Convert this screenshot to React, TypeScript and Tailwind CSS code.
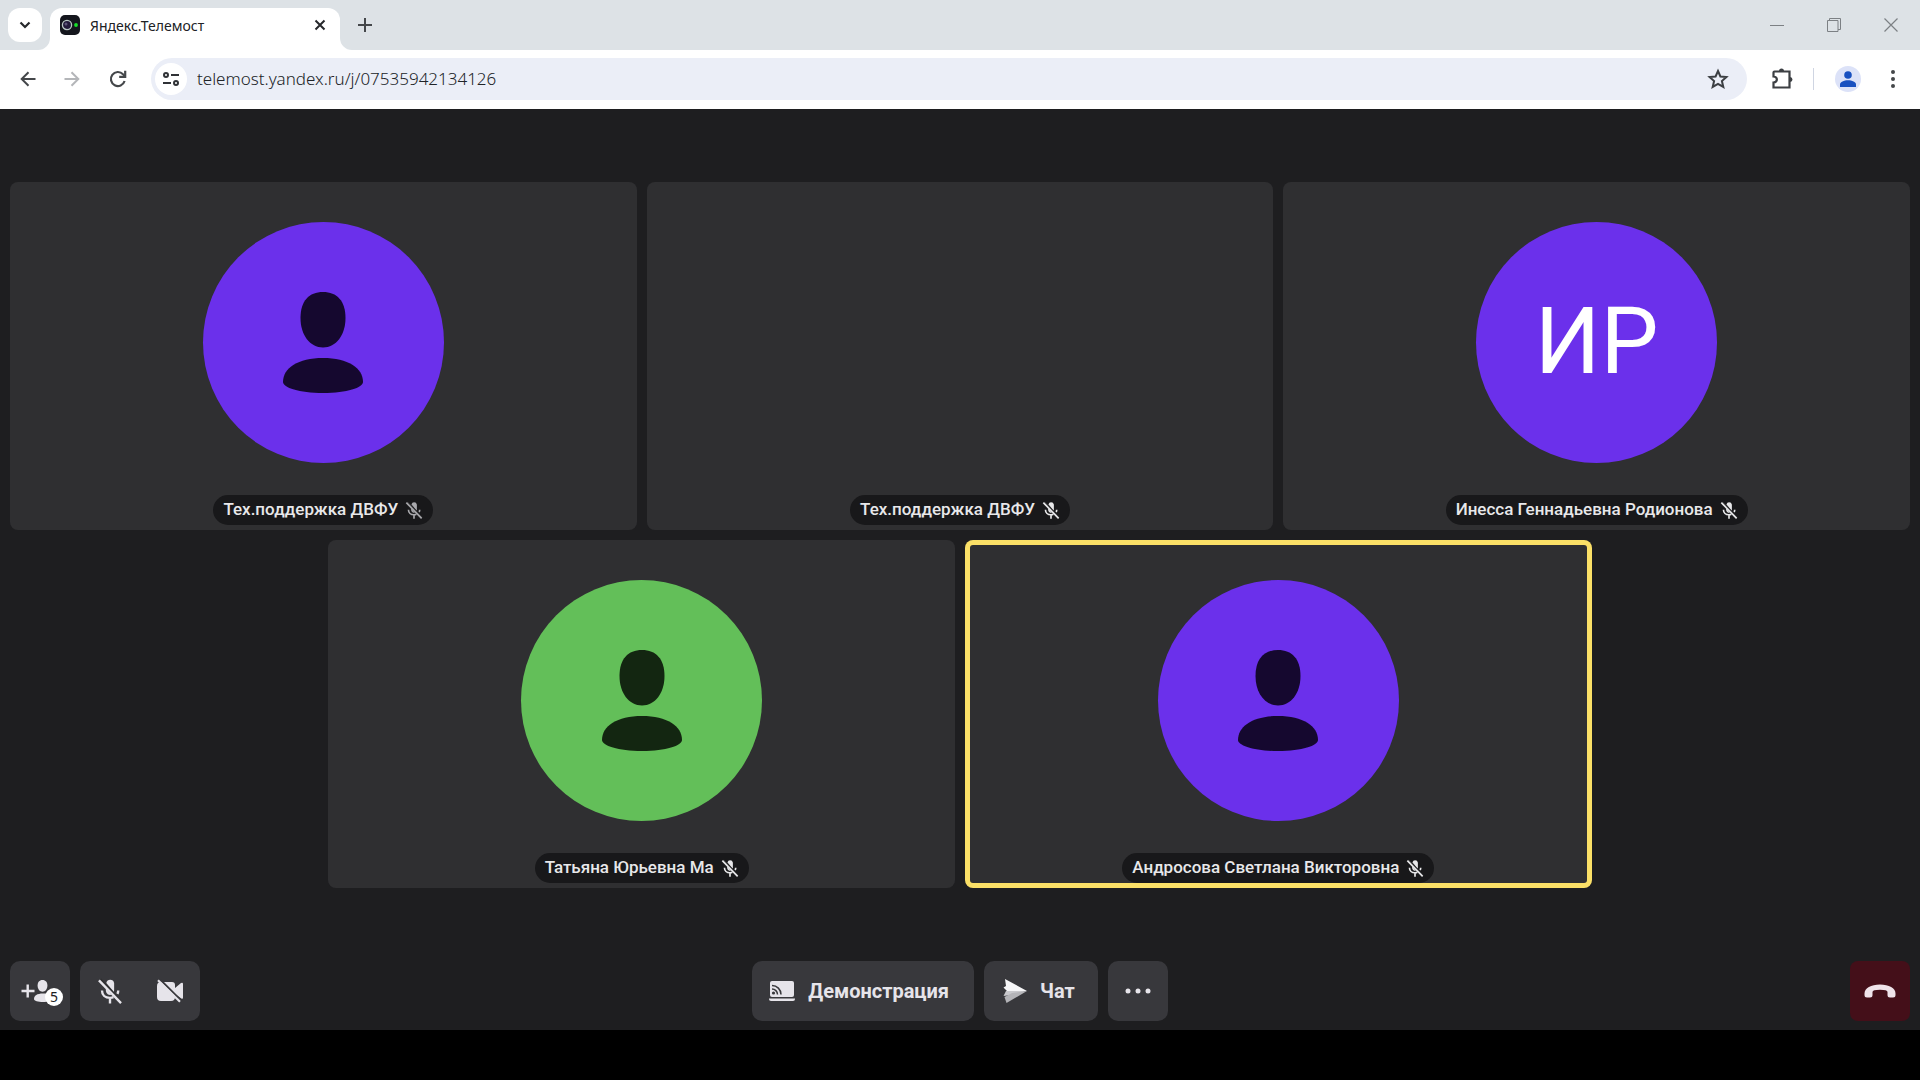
import React from "react";

type Participant = {
  name: string;
  avatar: "purple" | "green" | "initials" | "none";
  place: string;
  speaking?: boolean;
  dimMic?: boolean;
};

const participants: Participant[] = [
  { name: "Тех.поддержка ДВФУ", avatar: "purple", place: "col-span-2", dimMic: true },
  { name: "Тех.поддержка ДВФУ", avatar: "none", place: "col-span-2" },
  { name: "Инесса Геннадьевна Родионова", avatar: "initials", place: "col-span-2" },
  { name: "Татьяна Юрьевна Ма", avatar: "green", place: "col-span-2 col-start-2" },
  { name: "Андросова Светлана Викторовна", avatar: "purple", place: "col-span-2", speaking: true },
];

function MicOff({ className }: { className: string }) {
  return (
    <svg viewBox="0 0 24 24" className={className} fill="none" aria-hidden="true">
      <path d="M8.600 4.500A3.700 3.700 0 0 1 15.800 4.500v6.500c0 .7-.1 1.200-.3 1.700z" fill="currentColor" />
      <path d="M8.200 9.500v2.500a4 4 0 0 0 5 3.500z" fill="currentColor" />
      <path d="M4.600 11.500c0 4 3 6.800 7.400 6.800 1.200 0 2.300-.2 3.200-.6M12 18.300V23.500M19.600 11.500c0 1.200-.3 2.300-.8 3.200" stroke="currentColor" strokeWidth="2.200" />
      <path d="M3.200 1.200l19 21" className="stroke-[#2f2f31]" strokeWidth="2" />
      <path d="M1.800 2.200l20.400 21" stroke="currentColor" strokeWidth="2.200" />
    </svg>
  );
}

function Person() {
  return (
    <svg viewBox="0 0 80 101" className="h-[101px] w-20" fill="currentColor" aria-hidden="true">
      <path d="M40 0C54 0 62.500 9 62.500 26C62.500 43 53 55.500 40 55.500C27 55.500 17.500 43 17.500 26C17.500 9 26 0 40 0Z" />
      <path d="M40 66C65 66 80 76 80 90C80 95.500 64 101 40 101C16 101 0 95.500 0 90C0 76 15 66 40 66Z" />
    </svg>
  );
}

const avatarColors = {
  purple: "bg-[#6b30eb] text-[#15082f]",
  initials: "bg-[#6b30eb] text-white",
  green: "bg-[#63bf59] text-[#132611]",
  none: "invisible",
};

function Tile({ p }: { p: Participant }) {
  return (
    <article
      className={`${p.place} flex aspect-[9/5] flex-col items-center justify-between rounded-lg bg-[#2f2f31] pt-10 pb-[5px] ${
        p.speaking ? "inset-ring-[5px] inset-ring-[#fbe067]" : ""
      }`}
    >
      <div className={`flex size-[241px] items-center justify-center rounded-full ${avatarColors[p.avatar]}`}>
        {p.avatar === "initials" ? (
          <span className="text-[92px] leading-none">ИР</span>
        ) : p.avatar === "none" ? null : (
          <Person />
        )}
      </div>
      <div className="flex h-[30px] items-center gap-[7px] rounded-full bg-[#18181a] px-2.5 text-[#e8e8ea]">
        <span className="text-[17px] font-medium">{p.name}</span>
        <MicOff className={p.dimMic ? "size-[18px] text-[#a8a8ac]" : "size-[18px]"} />
      </div>
    </article>
  );
}

function BrowserTabs() {
  return (
    <header className="flex h-[50px] items-stretch bg-[#dde2e6]">
      <button aria-label="Поиск вкладок" className="mt-2 ml-2 flex size-[34px] items-center justify-center rounded-xl bg-white text-[#26282b]">
        <svg viewBox="0 0 12 8" className="h-2 w-3" fill="none" stroke="currentColor" strokeWidth="2.200" aria-hidden="true">
          <path d="M1.500 1.500L6 6l4.500-4.500" />
        </svg>
      </button>
      <div className="relative mt-2 ml-2 flex w-[290px] items-center rounded-t-xl bg-white pr-3.5 pb-2 pl-2.5">
        <svg viewBox="0 0 12 12" className="absolute bottom-0 -left-3 size-3 fill-white" aria-hidden="true">
          <path d="M12 0v12H0A12 12 0 0 0 12 0z" />
        </svg>
        <svg viewBox="0 0 12 12" className="absolute -right-3 bottom-0 size-3 fill-white" aria-hidden="true">
          <path d="M0 0v12h12A12 12 0 0 1 0 0z" />
        </svg>
        <svg viewBox="0 0 20 20" className="size-5" aria-hidden="true">
          <rect width="20" height="20" rx="5" fill="#14161d" />
          <circle cx="7" cy="10" r="4.600" fill="#221a3a" stroke="#b9c7c4" strokeWidth="1.300" />
          <circle cx="6" cy="9" r="1.500" fill="#5c5478" />
          <circle cx="16" cy="10" r="1.900" fill="#18e02a" />
        </svg>
        <span className="ml-2.5 flex-1 text-[14px] text-[#202124]">Яндекс.Телемост</span>
        <button aria-label="Закрыть вкладку" className="text-[#26282b]">
          <svg viewBox="0 0 12 12" className="size-3" stroke="currentColor" strokeWidth="2" aria-hidden="true">
            <path d="M1.500 1.500l9 9M10.500 1.500l-9 9" />
          </svg>
        </button>
      </div>
      <button aria-label="Новая вкладка" className="ml-[18px] text-[#44474a]">
        <svg viewBox="0 0 14 14" className="size-3.5" stroke="currentColor" strokeWidth="2" aria-hidden="true">
          <path d="M7 0v14M0 7h14" />
        </svg>
      </button>
      <div className="ml-auto flex items-center gap-[43px] pr-[22px] text-[#7c8084]">
        <button aria-label="Свернуть">
          <svg viewBox="0 0 14 14" className="size-3.5" stroke="currentColor" fill="none" aria-hidden="true">
            <path d="M0 7.500h14" />
          </svg>
        </button>
        <button aria-label="Развернуть">
          <svg viewBox="0 0 14 14" className="size-3.5" stroke="currentColor" fill="none" aria-hidden="true">
            <path d="M.5 2.500h10.500v11H.5zM2.500 2.500v-2h11v11H11" />
          </svg>
        </button>
        <button aria-label="Закрыть">
          <svg viewBox="0 0 14 14" className="size-3.5" stroke="currentColor" fill="none" strokeWidth="1.200" aria-hidden="true">
            <path d="M.5.5l13 13M13.500.5l-13 13" />
          </svg>
        </button>
      </div>
    </header>
  );
}

function AddressBar() {
  return (
    <nav className="flex h-[59px] items-center bg-white pr-[17px] pb-0.5 pl-5 text-[#44474a]">
      <button aria-label="Назад">
        <svg viewBox="0 0 16 16" className="size-4" fill="none" stroke="currentColor" strokeWidth="2" aria-hidden="true">
          <path d="M15.500 8H2M8.500 1.200L1.700 8l6.800 6.800" />
        </svg>
      </button>
      <button aria-label="Вперёд" className="ml-7 text-[#b4b6b9]">
        <svg viewBox="0 0 16 16" className="size-4" fill="none" stroke="currentColor" strokeWidth="2" aria-hidden="true">
          <path d="M.5 8H14M7.500 1.200L14.300 8l-6.800 6.800" />
        </svg>
      </button>
      <button aria-label="Обновить" className="ml-[29px]">
        <svg viewBox="0 0 18 18" className="size-[18px]" fill="none" stroke="currentColor" strokeWidth="2.200" aria-hidden="true">
          <path d="M15.600 11A7 7 0 1 1 14 4.200L16 6.200" />
          <path d="M16.200.8v6h-6" />
        </svg>
      </button>
      <div className="ml-6 flex h-[42px] flex-1 items-center rounded-full bg-[#ebeef7] pr-[18px] pl-1">
        <button aria-label="Сведения о сайте" className="flex size-8 items-center justify-center rounded-full bg-white text-[#303236]">
          <svg viewBox="0 0 16 14" className="h-3.5 w-4" fill="none" stroke="currentColor" strokeWidth="2" aria-hidden="true">
            <circle cx="3" cy="3" r="2" />
            <path d="M8 3h8M0 11h8" />
            <circle cx="13" cy="11" r="2" />
          </svg>
        </button>
        <input
          aria-label="Адресная строка"
          readOnly
          value="telemost.yandex.ru/j/07535942134126"
          className="ml-2.5 min-w-0 flex-1 bg-transparent text-[17px] font-light text-[#202327] outline-none"
        />
        <button aria-label="Добавить в закладки" className="text-[#3c3f43]">
          <svg viewBox="0 0 22 22" className="size-[22px]" fill="none" stroke="currentColor" strokeWidth="2" aria-hidden="true">
            <path d="M11 3l2.400 5.500 6 .5-4.500 4 1.400 5.900L11 15.800l-5.300 3.100L7.100 13 2.600 9l6-.5z" />
          </svg>
        </button>
      </div>
      <button aria-label="Расширения" className="ml-6 text-[#3c3f43]">
        <svg viewBox="0 0 22 22" className="size-[22px]" fill="none" stroke="currentColor" strokeWidth="2.200" aria-hidden="true">
          <path d="M3.500 3.500H18.500V19.500H2.500V14.500C7 14 7 9 2.500 8.500V4.500Q2.500 3.500 3.500 3.500Z" />
          <path d="M8 3a2.500 2.500 0 0 1 5 0zM19 9a2.500 2.500 0 0 1 0 5z" fill="currentColor" stroke="none" />
        </svg>
      </button>
      <span className="ml-5 h-[22px] w-px bg-[#cfd5e2]" />
      <button aria-label="Профиль" className="ml-[21px] flex size-[26px] items-center justify-center rounded-full bg-[#dce2f8] text-[#1850c0]">
        <svg viewBox="0 0 16 16" className="size-4" fill="currentColor" aria-hidden="true">
          <circle cx="8" cy="4" r="3.800" />
          <path d="M0 16v-2.500C0 11 4 9.300 8 9.300s8 1.700 8 4.200V16z" />
        </svg>
      </button>
      <button aria-label="Меню" className="ml-[22px]">
        <svg viewBox="0 0 20 20" className="size-5" fill="currentColor" aria-hidden="true">
          <circle cx="10" cy="3" r="2" />
          <circle cx="10" cy="10" r="2" />
          <circle cx="10" cy="17" r="2" />
        </svg>
      </button>
    </nav>
  );
}

function CallControls() {
  return (
    <footer className="grid grid-cols-[1fr_auto_1fr] items-center px-2.5 pb-[9px] text-[#e6e4ea]">
      <div className="flex gap-2.5">
        <button aria-label="Участники" className="relative flex size-[60px] items-center justify-center rounded-[10px] bg-[#38383c]">
          <svg viewBox="0 0 42 30" className="h-[30px] w-[42px]" fill="currentColor" aria-hidden="true">
            <path d="M7.500 8.500h2.400v5.300h5.600v2.400H9.900v5.300H7.500v-5.300H2.500v-2.400h5z" />
            <path d="M23.500 4c3.200 0 4.900 2.200 4.900 5.600s-2.100 6.200-4.900 6.200-4.900-2.800-4.900-6.200S20.300 4 23.500 4z" />
            <path d="M24 17.500c6 0 9 2.200 9 5.500 0 2-4 3-9 3s-9-1-9-3c0-3.300 3-5.500 9-5.500z" />
          </svg>
          <span className="absolute right-[7px] bottom-[15px] flex size-[18px] items-center justify-center rounded-full bg-white font-['Noto_Sans'] text-[14px] leading-none text-[#202022]">5</span>
        </button>
        <div className="flex rounded-[10px] bg-[#38383c]">
          <button aria-label="Включить микрофон" className="flex size-[60px] items-center justify-center">
            <MicOff className="size-[26px]" />
          </button>
          <button aria-label="Включить камеру" className="flex size-[60px] items-center justify-center">
            <svg viewBox="0 0 28 24" className="h-6 w-7" fill="none" aria-hidden="true">
              <path d="M5 3h11q3 0 3 3v3l6-5q2-1 2 1v13.500q0 2-2 .7l-6-4.200v3q0 4-4 4H5q-4 0-4-4V7q0-4 4-4z" fill="currentColor" />
              <path d="M4.500 1l21 21" stroke="#38383c" strokeWidth="2.200" />
              <path d="M2 1.200l22 21.600" stroke="currentColor" strokeWidth="2.200" />
            </svg>
          </button>
        </div>
      </div>
      <div className="flex gap-2.5 text-xl font-bold">
        <button className="flex h-[60px] items-center gap-3 rounded-[10px] bg-[#38383c] pr-[25px] pl-4">
          <svg viewBox="0 0 28 22" className="h-[22px] w-7" aria-hidden="true">
            <rect x="2" y="1" width="24" height="16" rx="2" fill="currentColor" />
            <path d="M1 18.500h26v.5q0 2-2 2H3q-2 0-2-2z" fill="currentColor" />
            <path d="M4 5.500a9 9 0 0 1 9 9M4 9a5.500 5.500 0 0 1 5.500 5.500" fill="none" stroke="#38383c" strokeWidth="1.500" />
            <circle cx="5.500" cy="13" r="1.600" fill="#38383c" />
          </svg>
          <span>Демонстрация</span>
        </button>
        <button className="flex h-[60px] items-center gap-3 rounded-[10px] bg-[#38383c] pr-[23px] pl-[18px]">
          <svg viewBox="0 0 26 24" className="h-6 w-[26px]" aria-hidden="true">
            <path d="M3 0L25 12L5 12L1.500 8.500L4 7z" fill="#f6f6f8" />
            <path d="M4 12L25 12L9 16L1.500 17z" fill="#c9c9cd" />
            <path d="M25 12L4.500 24L2.500 18L10 14z" fill="#b4b4b8" />
          </svg>
          <span>Чат</span>
        </button>
        <button aria-label="Ещё" className="flex size-[60px] items-center justify-center rounded-[10px] bg-[#38383c]">
          <svg viewBox="0 0 26 6" className="h-1.5 w-[26px]" fill="currentColor" aria-hidden="true">
            <circle cx="3" cy="3" r="2.500" />
            <circle cx="13" cy="3" r="2.500" />
            <circle cx="23" cy="3" r="2.500" />
          </svg>
        </button>
      </div>
      <button aria-label="Завершить звонок" className="flex size-[60px] items-center justify-center justify-self-end rounded-lg bg-[#440f19]">
        <svg viewBox="0 0 32 14" className="h-3.5 w-8" fill="#f0e4ea" aria-hidden="true">
          <path d="M16 .5C25 .5 31.500 4 31.500 9.500V11Q31.500 13.500 29 13.500H26Q23.500 13.500 23.500 11V8Q23.500 5.800 16 5.800T8.500 8V11Q8.500 13.500 6 13.500H3Q.5 13.500.5 11V9.500C.5 4 7 .5 16 .5Z" />
        </svg>
      </button>
    </footer>
  );
}

export default function App() {
  return (
    <div className="flex min-h-screen flex-col bg-black pb-[50px] font-['Noto_Sans',sans-serif]">
      <BrowserTabs />
      <AddressBar />
      <div className="flex flex-1 flex-col bg-[#1e1e20] font-[Roboto,sans-serif]">
        <main className="flex flex-1 flex-col justify-center px-2.5">
          <div className="grid grid-cols-6 gap-2.5">
            {participants.map((p, i) => (
              <Tile key={i} p={p} />
            ))}
          </div>
        </main>
        <CallControls />
      </div>
    </div>
  );
}
